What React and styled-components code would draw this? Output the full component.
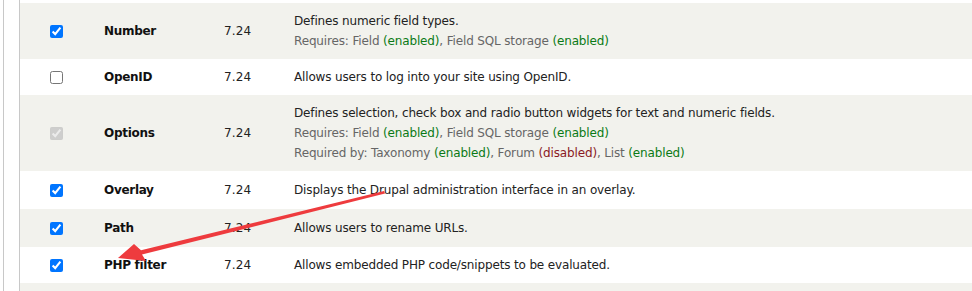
import React from "react";
import styled, { createGlobalStyle } from "styled-components";

const Global = createGlobalStyle`
  html, body { margin: 0; padding: 0; background: #fff; }
  body { font-family: "DejaVu Sans", Verdana, sans-serif; }
`;

const Page = styled.div`
  position: relative;
  width: 972px;
  height: 291px;
  overflow: hidden;
  padding-left: 3px;
  box-sizing: border-box;
  background: #fff;
`;

const Frame = styled.div`
  border-left: 1px solid #c8c8c8;
  padding-left: 15px;
  height: 100%;
`;

const Table = styled.div`
  border-left: 1px solid #c8c8c8;
  height: 100%;
  padding-top: 3px;
  box-sizing: border-box;
`;

const Row = styled.div`
  display: grid;
  grid-template-columns: 84px 120px 70px 1fr;
  align-items: center;
  background: ${(p) => (p.$odd ? "#f2f2ed" : "#fff")};
  padding: ${(p) => p.$pad}px 0;
  font-size: 12px;
  line-height: 20px;
  letter-spacing: -0.15px;
  color: #222;
`;

const CheckCell = styled.div`
  padding-left: 30px;
  display: flex;
  align-items: center;
`;

const Check = styled.input`
  margin: 0;
  width: 13px;
  height: 13px;
`;

const Name = styled.div`
  font-weight: bold;
  color: #111;
  letter-spacing: -0.3px;
`;

const Version = styled.div`
  color: #222;
  letter-spacing: 0.1px;
`;

const Desc = styled.div``;

const Meta = styled.div`
  color: #666;
`;

const Status = styled.span`
  color: ${(p) => (p.$on ? "#0b7a16" : "#8a1a24")};
`;

const Arrow = styled.svg`
  position: absolute;
  left: 0;
  top: 0;
  pointer-events: none;
`;

const on = <Status $on>(enabled)</Status>;
const off = <Status>(disabled)</Status>;

const rows = [
  {
    name: "Number",
    checked: true,
    desc: "Defines numeric field types.",
    meta: [<>Requires: Field {on}, Field SQL storage {on}</>],
    pad: 8,
  },
  { name: "OpenID", checked: false, desc: "Allows users to log into your site using OpenID.", pad: 8 },
  {
    name: "Options",
    checked: true,
    disabled: true,
    desc: "Defines selection, check box and radio button widgets for text and numeric fields.",
    meta: [
      <>Requires: Field {on}, Field SQL storage {on}</>,
      <>Required by: Taxonomy {on}, Forum {off}, List {on}</>,
    ],
    pad: 8,
  },
  { name: "Overlay", checked: true, desc: "Displays the Drupal administration interface in an overlay.", pad: 9 },
  { name: "Path", checked: true, desc: "Allows users to rename URLs.", pad: 9 },
  { name: "PHP filter", checked: true, desc: "Allows embedded PHP code/snippets to be evaluated.", pad: 8 },
  { name: "", checked: null, desc: "", pad: 8 },
];

export default function App() {
  return (
    <>
      <Global />
      <Page>
        <Frame>
          <Table>
            {rows.map((r, i) => (
              <Row key={i} $odd={i % 2 === 0} $pad={r.pad}>
                <CheckCell>
                  {r.checked !== null && (
                    <Check
                      type="checkbox"
                      defaultChecked={r.checked}
                      disabled={r.disabled}
                    />
                  )}
                </CheckCell>
                <Name>{r.name}</Name>
                <Version>{r.name ? "7.24" : ""}</Version>
                <Desc>
                  <div>{r.desc || "\u00a0"}</div>
                  {r.meta && r.meta.map((m, j) => <Meta key={j}>{m}</Meta>)}
                </Desc>
              </Row>
            ))}
          </Table>
        </Frame>
        <Arrow width="972" height="291" viewBox="0 0 972 291">
          <polygon
            points="384,191 385,193.5 142,254.6 146,261 118,258 134,244 141,250.2"
            fill="#ee3b3e"
          />
        </Arrow>
      </Page>
    </>
  );
}
